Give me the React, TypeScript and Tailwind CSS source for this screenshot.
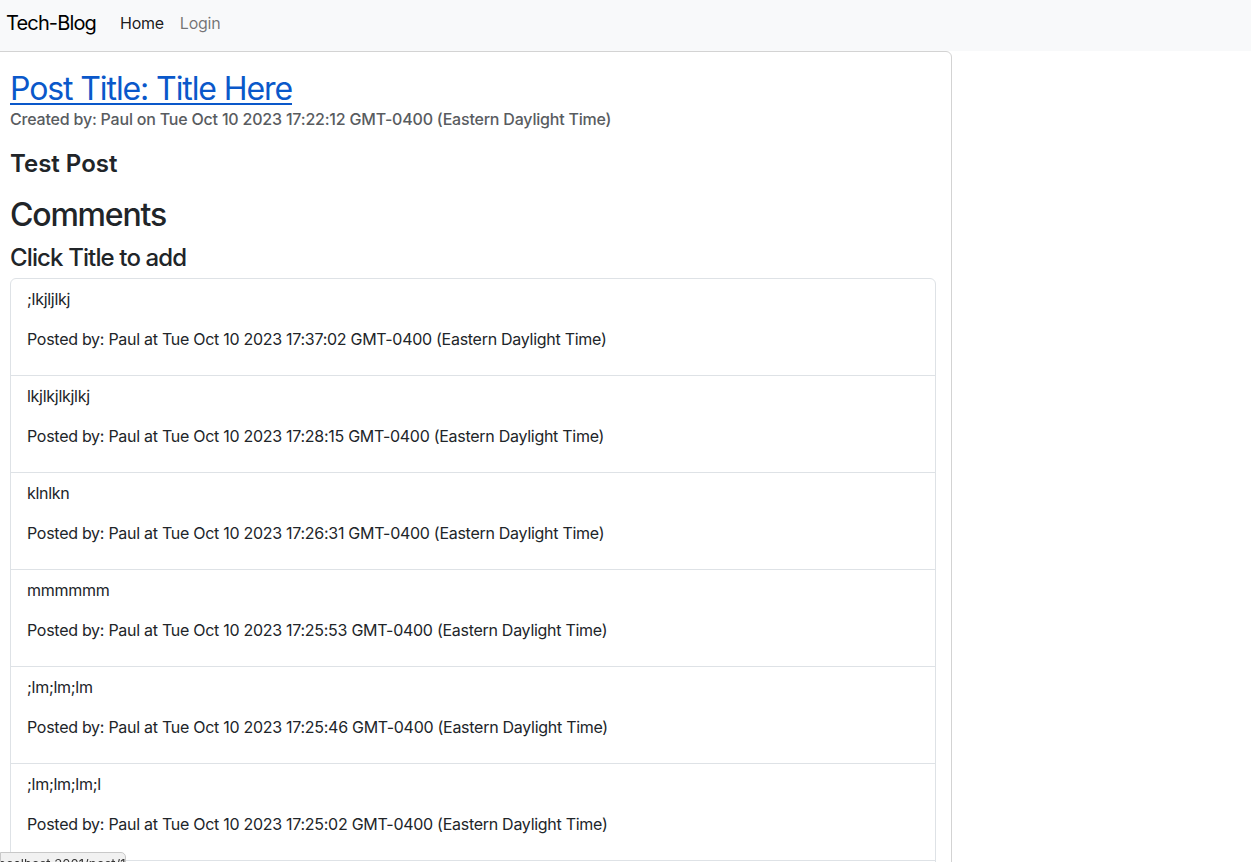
import React from 'react'

const comments = [
  { body: ';lkjljlkj', at: 'Tue Oct 10 2023 17:37:02 GMT-0400 (Eastern Daylight Time)' },
  { body: 'lkjlkjlkjlkj', at: 'Tue Oct 10 2023 17:28:15 GMT-0400 (Eastern Daylight Time)' },
  { body: 'klnlkn', at: 'Tue Oct 10 2023 17:26:31 GMT-0400 (Eastern Daylight Time)' },
  { body: 'mmmmmm', at: 'Tue Oct 10 2023 17:25:53 GMT-0400 (Eastern Daylight Time)' },
  { body: ';lm;lm;lm', at: 'Tue Oct 10 2023 17:25:46 GMT-0400 (Eastern Daylight Time)' },
  { body: ';lm;lm;lm;l', at: 'Tue Oct 10 2023 17:25:02 GMT-0400 (Eastern Daylight Time)' },
  { body: 'test', at: 'Tue Oct 10 2023 17:24:40 GMT-0400 (Eastern Daylight Time)' },
]

function Navbar() {
  return (
    <nav className="h-[51px] bg-[#f8f9fa] flex items-center pb-[6px] px-[6px]">
      <a href="#" className="text-[20px] tracking-[-0.85px] text-black mr-[24px]">Tech-Blog</a>
      <a href="#" className="text-[16px] tracking-[-0.25px] text-black/90 mr-[16px]">Home</a>
      <a href="#" className="text-[16px] tracking-[-0.25px] text-black/55">Login</a>
    </nav>
  )
}

export default function App() {
  return (
    <div className="min-h-screen bg-white text-[#212529]" style={{ fontFamily: 'Inter, "Liberation Sans", Arial, sans-serif' }}>
      <Navbar />
      <div className="w-[959px] -ml-[7px] border border-[#d3d3d3] rounded-[6px] px-[16px] pt-[18px] pb-[16px] flex flex-col">
        <a href="#" className="text-[32px] leading-[38px] tracking-[-1.1px] text-[#0a58ca] underline decoration-[2px] underline-offset-[3px] w-fit">
          Post Title: Title Here
        </a>
        <h6 className="mt-[2px] text-[16px] leading-[19px] tracking-[-0.2px] font-medium text-[#595c5f]">
          Created by: Paul on Tue Oct 10 2023 17:22:12 GMT-0400 (Eastern Daylight Time)
        </h6>
        <h4 className="mt-[20px] text-[24px] leading-[29px] tracking-[0px] font-semibold">Test Post</h4>
        <h2 className="mt-[18px] text-[32px] leading-[38px] tracking-[-1.2px] font-medium">Comments</h2>
        <h4 className="mt-[9px] text-[24px] leading-[29px] tracking-[-0.87px] font-medium">Click Title to add</h4>
        <ul className="mt-[6px] w-[926px] border border-[#dee2e6] rounded-[6px]">
          {comments.map((c, i) => (
            <li key={i} className={`px-[16px] py-[8px] text-[16px] leading-[24px] tracking-[-0.28px] ${i > 0 ? 'border-t border-[#dee2e6]' : ''}`}>
              <p className="mb-[16px]">{c.body}</p>
              <p className="mb-[16px]">Posted by: Paul at {c.at}</p>
            </li>
          ))}
        </ul>
      </div>
      <div className="fixed left-0 top-[852px] w-[126px] h-[24px] bg-[#f1f1f1] border border-[#c8c8c8] rounded-tr-[5px] text-[13px] leading-[22px] text-[#333] overflow-hidden whitespace-nowrap">
        <span className="-ml-[6px] block">localhost:3001/post/1</span>
      </div>
    </div>
  )
}
